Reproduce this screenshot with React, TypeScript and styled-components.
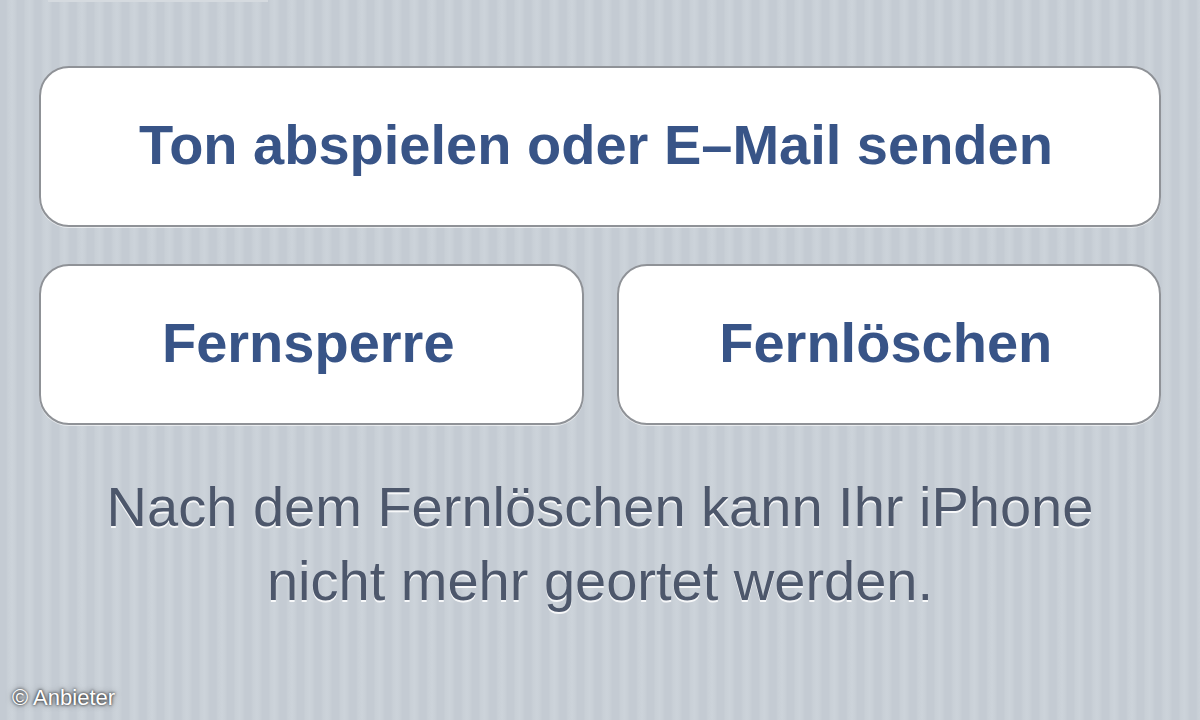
import * as React from 'react';
import styled, {createGlobalStyle} from 'styled-components';

const GlobalStyle = createGlobalStyle`
  html, body {
    margin: 0;
    padding: 0;
  }
  body {
    font-family: "Liberation Sans", Arial, Helvetica, sans-serif;
    -webkit-font-smoothing: antialiased;
  }
`;

export default function App() {
    return (
        <>
            <GlobalStyle/>
            <Screen>
                <TopEdge/>
                <ButtonGroup>
                    <ActionButton wide>Ton abspielen oder E–Mail senden</ActionButton>
                    <ActionButton>Fernsperre</ActionButton>
                    <ActionButton>Fernlöschen</ActionButton>
                </ButtonGroup>
                <Footnote>
                    Nach dem Fernlöschen kann Ihr iPhone<br/>
                    nicht mehr geortet werden.
                </Footnote>
                <Credit>© Anbieter</Credit>
            </Screen>
        </>
    );
}

// iOS grouped table pinstripes, soft edged
const Screen = styled.div`
  position: relative;
  width: 1200px;
  height: 720px;
  overflow: hidden;
  display: flex;
  flex-direction: column;
  background-color: #c8cfd6;
  background-image: repeating-linear-gradient(
    90deg,
    #c4cbd3 0px,
    #c4cbd3 6px,
    #c9d0d7 8px,
    #ccd3da 12px,
    #c9d0d7 15px,
    #c4cbd3 17.5px
  );
`;

const TopEdge = styled.div`
  width: 220px;
  height: 2px;
  margin-left: 48px;
  background: #d5dadf;
`;

const ButtonGroup = styled.div`
  display: grid;
  grid-template-columns: 1fr 1fr;
  column-gap: 33px;
  row-gap: 37px;
  padding: 64px 39px 0 39px;
`;

const ActionButton = styled.button<{ wide?: boolean }>`
  grid-column: ${props => props.wide ? '1 / span 2' : 'auto'};
  height: 161px;
  box-sizing: border-box;
  display: flex;
  align-items: center;
  justify-content: center;
  padding: 0 ${props => props.wide ? '8px' : '6px'} 4px 0;
  background: #ffffff;
  border: 2.5px solid #8f9297;
  border-radius: 30px;
  box-shadow: 0 1px 0 rgba(255, 255, 255, 0.6);
  font-family: "Liberation Sans", Arial, Helvetica, sans-serif;
  font-size: 56px;
  font-weight: 700;
  color: #385487;
  cursor: pointer;
`;

const Footnote = styled.p`
  margin: 45px 0 0 0;
  text-align: center;
  font-size: 56px;
  line-height: 74px;
  color: #4d576b;
  text-shadow: 0 2px 0 rgba(255, 255, 255, 0.85);
`;

const Credit = styled.span`
  position: absolute;
  left: 12px;
  bottom: 9px;
  font-size: 22px;
  color: #ffffff;
  text-shadow: 0 0 3px rgba(0, 0, 0, 0.9), 0 0 6px rgba(0, 0, 0, 0.5);
`;
